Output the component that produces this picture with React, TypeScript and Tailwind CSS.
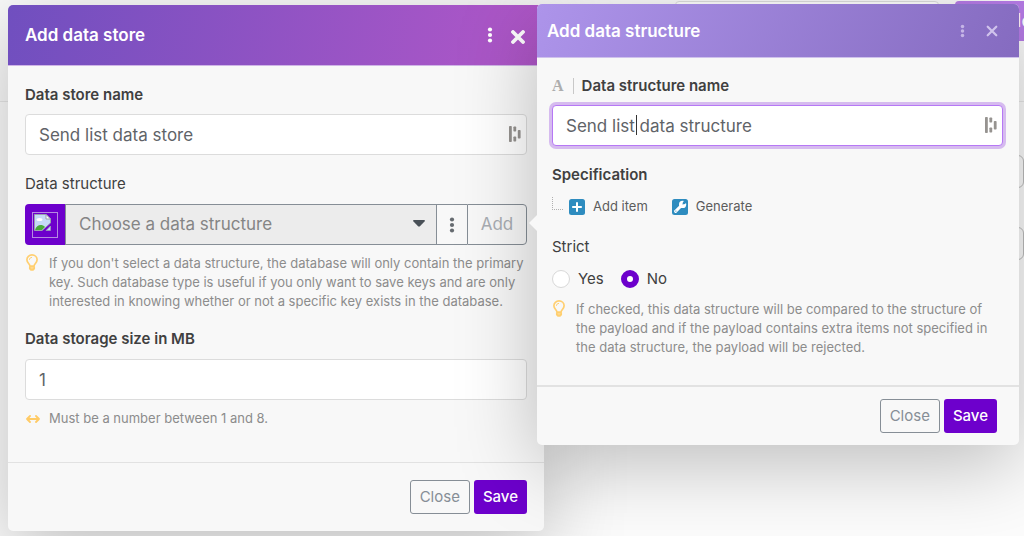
import { useState } from 'react';
import type { ReactNode } from 'react';

function KebabIcon({ className }: { className?: string }) {
  return (
    <svg viewBox="0 0 6 16" className={className} fill="currentColor" aria-hidden="true">
      <circle cx="3" cy="2.5" r="2.1" />
      <circle cx="3" cy="8" r="2.1" />
      <circle cx="3" cy="13.5" r="2.1" />
    </svg>
  );
}

function CloseIcon({ className }: { className?: string }) {
  return (
    <svg viewBox="0 0 14 14" className={className} fill="none" stroke="currentColor" aria-hidden="true">
      <path d="M2 2 L12 12 M12 2 L2 12" strokeLinecap="round" />
    </svg>
  );
}

function BulbIcon() {
  return (
    <svg viewBox="0 0 12 17" className="h-[17px] w-3" fill="none" stroke="#ffcf70" strokeWidth="1.7" aria-hidden="true">
      <path d="M4 12.2 C4 9.8 0.9 9 0.9 5.8 C0.9 3 3.2 0.9 6 0.9 C8.8 0.9 11.1 3 11.1 5.8 C11.1 9 8 9.8 8 12.2 Z" />
      <path d="M3.4 5.8 C3.4 4.4 4.5 3.4 6 3.4" strokeWidth="1" />
      <path d="M3.8 12.5 V14.6 L5 15.9 H7 L8.2 14.6 V12.5 M4 14 H8" />
    </svg>
  );
}

function RangeIcon() {
  return (
    <svg viewBox="0 0 14 8" className="h-2 w-3.5" fill="none" stroke="#ffcb66" strokeWidth="1.8" aria-hidden="true">
      <path d="M1 4 H13 M4 1 L1 4 L4 7 M10 1 L13 4 L10 7" strokeLinecap="round" strokeLinejoin="round" />
    </svg>
  );
}

function AutofillIcon() {
  return (
    <svg viewBox="0 0 12 16" className="h-4 w-3" fill="#969390" aria-hidden="true">
      <rect x="0" y="0" width="2.8" height="16" rx="0.8" />
      <rect x="4.4" y="0.5" width="2.8" height="5" rx="0.8" />
      <rect x="4.4" y="10.5" width="2.8" height="5" rx="0.8" />
      <rect x="8.8" y="4" width="2.8" height="8.5" rx="0.8" />
    </svg>
  );
}

function BrokenImageIcon() {
  return (
    <svg viewBox="0 0 26 26" className="size-[26px]" aria-hidden="true">
      <rect x="0.5" y="0.5" width="25" height="25" fill="none" stroke="#b58be0" />
      <path d="M2.5 2.5 H14 L18.5 7 V11 L10 18.5 H2.5 Z" fill="#c6d9f7" stroke="#9aa3ad" />
      <path d="M14 2.5 V7 H18.5 Z" fill="#fff" stroke="#9aa3ad" />
      <ellipse cx="7.5" cy="7.5" rx="3" ry="1.6" fill="#fff" />
      <path d="M3 18 C4.5 13 9.5 11.5 13 15 L9.8 18 Z" fill="#4aa83a" />
      <path d="M14 18.5 L18.5 14 V18.5 Z" fill="#c6d9f7" stroke="#9aa3ad" strokeWidth="0.7" />
    </svg>
  );
}

function PlusBoxIcon() {
  return (
    <svg viewBox="0 0 16 16" className="size-4" aria-hidden="true">
      <rect width="16" height="16" rx="2.5" fill="#2e8cbf" />
      <path d="M8 3.2 V12.8 M3.2 8 H12.8" stroke="#fff" strokeWidth="2" />
    </svg>
  );
}

function WrenchBoxIcon() {
  return (
    <svg viewBox="0 0 16 16" className="size-4" aria-hidden="true">
      <rect width="16" height="16" rx="2.5" fill="#2e8cbf" />
      <path d="M3.6 12.4 L9.2 6.8" stroke="#fff" strokeWidth="3" strokeLinecap="round" />
      <circle cx="10.6" cy="5.4" r="3.6" fill="#fff" />
      <path d="M10.4 5.6 L11 3 L13.4 0.6 L15.4 2.6 L13 5 Z" fill="#2e8cbf" />
      <circle cx="3.9" cy="12.1" r="0.6" fill="#2e8cbf" />
    </svg>
  );
}

function Hint({ icon, children }: { icon: ReactNode; children: ReactNode }) {
  return (
    <div className="mt-[9px] flex text-[13px] leading-[19px] text-[#8c8c8c]">
      <span className="flex w-6 shrink-0 justify-start pl-px">{icon}</span>
      <p className="flex-1">{children}</p>
    </div>
  );
}

function DialogButtons() {
  return (
    <>
      <button type="button" className="h-[34px] rounded-[3px] border border-[#868e96] px-[9px] text-[15px] text-[#868e96]">
        Close
      </button>
      <button type="button" className="h-[34px] rounded-[3px] bg-[#6d00cc] px-[9px] text-[15px] font-medium text-white">
        Save
      </button>
    </>
  );
}

const inputClass =
  'block h-[41px] w-full rounded border bg-white px-[13px] pt-px text-[17px] text-[#5f6368] outline-none';

// Parts of the scenario page that show around the dialogs
function PageBackdrop() {
  return (
    <div className="absolute inset-0 overflow-hidden bg-[#fcfcfc]" aria-hidden="true">
      <div className="flex h-[102px] justify-end border-b border-[#e8e8e8] bg-[#fafafa] pt-px">
        <div className="mr-4 h-10 w-[264px] rounded border border-[#dedede] bg-white" />
        <div className="flex h-10 w-[69px] items-center justify-end overflow-hidden rounded-l bg-[#b67be6] text-lg font-medium text-white">
          <span className="-mr-2">Ne</span>
        </div>
      </div>
      <div className="mt-[53px] flex flex-col items-end gap-[39px]">
        <div className="h-[33px] w-20 rounded-md border border-[#bdbdbd]" />
        <div className="h-[33px] w-20 rounded-md border border-[#bdbdbd]" />
      </div>
    </div>
  );
}

function DataStoreDialog() {
  const [name, setName] = useState('Send list data store');
  const [size, setSize] = useState('1');

  return (
    <section className="mt-px -mr-[7px] rounded-[5px] bg-[#f8f8f8] shadow-[0_20px_80px_rgba(0,0,0,0.25)]">
      <header className="flex h-[61px] items-center rounded-t-[5px] border-b border-[#cfb5e6] bg-[linear-gradient(100deg,#704fbf,#b157c8)] pr-[19px] pl-[17px] text-white">
        <h2 className="flex-1 pt-0.5 text-[17px] font-semibold">Add data store</h2>
        <button type="button" aria-label="More options">
          <KebabIcon className="h-4 w-1.5" />
        </button>
        <button type="button" aria-label="Close dialog" className="mt-1 ml-[18px]">
          <CloseIcon className="size-3.5 stroke-[3.8]" />
        </button>
      </header>

      <div className="px-[17px] pt-[17px] pb-[34px]">
        <label htmlFor="store-name" className="block text-[15px] leading-6 font-semibold">
          Data store name
        </label>
        <div className="relative mt-[7px]">
          <input
            id="store-name"
            value={name}
            onChange={(e) => setName(e.target.value)}
            className={`${inputClass} border-[#dcdcdc]`}
          />
          <span className="absolute top-3 right-1.5">
            <AutofillIcon />
          </span>
        </div>

        <label htmlFor="structure" className="mt-[17px] block text-[15px] leading-6">
          Data structure
        </label>
        <div className="mt-2 flex h-[41px] text-[#868e96]">
          <span className="flex w-10 shrink-0 items-center justify-center rounded-l bg-[#6d00cc]">
            <BrokenImageIcon />
          </span>
          <div className="relative flex-1">
            <select
              id="structure"
              className="h-full w-full appearance-none border border-[#868e96] bg-[#ececec] px-[13px] text-[17px] text-[#858585]"
            >
              <option>Choose a data structure</option>
            </select>
            <svg viewBox="0 0 12 7" className="pointer-events-none absolute top-4 right-3 h-[7px] w-3" fill="#495057" aria-hidden="true">
              <path d="M0.5 0 H11.5 L12 1 L6.7 6.6 H5.3 L0 1 Z" />
            </svg>
          </div>
          <button type="button" aria-label="Structure options" className="flex w-[30px] items-center justify-center border-y border-[#868e96] text-[#666b70]">
            <KebabIcon className="h-4 w-1.5" />
          </button>
          <button type="button" className="w-[60px] rounded-r border border-[#868e96] text-[17px] text-[#a9adb3]">
            Add
          </button>
        </div>
        <Hint icon={<BulbIcon />}>
          If you don't select a data structure, the database will only contain the primary key. Such database type is
          useful if you only want to save keys and are only interested in knowing whether or not a specific key exists
          in the database.
        </Hint>

        <label htmlFor="size" className="mt-4 block text-[15px] leading-6 font-semibold">
          Data storage size in MB
        </label>
        <div className="mt-2">
          <input
            id="size"
            value={size}
            onChange={(e) => setSize(e.target.value)}
            className={`${inputClass} border-[#dcdcdc]`}
          />
        </div>
        <Hint icon={<span className="flex items-center"><RangeIcon /></span>}>Must be a number between 1 and 8.</Hint>
      </div>

      <footer className="flex justify-end gap-1 border-t border-[#e2e2e2] p-[17px]">
        <DialogButtons />
      </footer>
    </section>
  );
}

function DataStructureDialog() {
  const [name, setName] = useState('Send list data structure');
  const [strict, setStrict] = useState('no');

  return (
    <section className="relative rounded-[5px] bg-[#f8f8f8] shadow-[0_20px_80px_rgba(0,0,0,0.25)]">
      {/* Arrow pointing at the Add button */}
      <span className="absolute top-[211px] right-full border-y-8 border-r-8 border-y-transparent border-r-[#f8f8f8]" />

      <header className="flex h-[54px] items-center rounded-t-[5px] border-b border-[#cfc2ec] bg-[linear-gradient(115deg,#ad94ea,#856bc0)] pr-[21px] pl-2.5 text-white">
        <h2 className="flex-1 pt-0.5 text-[17px] font-semibold">Add data structure</h2>
        <button type="button" aria-label="More options" className="text-[#c5b5e6]">
          <KebabIcon className="h-3.5 w-[5px]" />
        </button>
        <button type="button" aria-label="Close dialog" className="ml-[21px] text-[#d0c3ec]">
          <CloseIcon className="size-3 stroke-[2.6]" />
        </button>
      </header>

      <div className="pt-4 pr-4 pb-7 pl-[15px]">
        <div className="flex items-center leading-6">
          <span className="border-r border-[#c8c8c8] pr-[9px] font-['Liberation_Serif',serif] text-base leading-4 font-bold text-[#adadad]">
            A
          </span>
          <label htmlFor="structure-name" className="pl-2 text-[15px] font-semibold">
            Data structure name
          </label>
        </div>
        <div className="relative mt-[7px]">
          <input
            id="structure-name"
            value={name}
            onChange={(e) => setName(e.target.value)}
            className={`${inputClass} border-[#b678f5] ring-3 ring-[#d6bbef]`}
          />
          <span className="absolute top-2.5 left-[84px] h-5 w-px bg-[#333]" />
          <span className="absolute top-3 right-1.5">
            <AutofillIcon />
          </span>
        </div>

        <h3 className="mt-[17px] text-[15px] leading-6 font-semibold">Specification</h3>
        <div className="mt-2.5 flex h-5 items-center text-[13px] text-[#5c5c5c]">
          <span className="mb-2 h-[13px] w-[11px] border-b border-l border-dotted border-[#b0b0b0]" />
          <button type="button" className="ml-1.5 flex items-center gap-2">
            <PlusBoxIcon />
            Add item
          </button>
          <button type="button" className="ml-6 flex items-center gap-2">
            <WrenchBoxIcon />
            Generate
          </button>
        </div>

        <fieldset className="mt-[18px]">
          <legend className="text-[15px] leading-6">Strict</legend>
          <div className="mt-2 flex h-6 items-center gap-[17px] text-[15px]">
            <label className="flex items-center gap-2">
              <input
                type="radio"
                name="strict"
                checked={strict === 'yes'}
                onChange={() => setStrict('yes')}
                className="size-[18px] appearance-none rounded-full border border-[#d8d8d8] bg-white checked:border-[6px] checked:border-[#6d00cc]"
              />
              Yes
            </label>
            <label className="flex items-center gap-2">
              <input
                type="radio"
                name="strict"
                checked={strict === 'no'}
                onChange={() => setStrict('no')}
                className="size-[18px] appearance-none rounded-full border border-[#d8d8d8] bg-white checked:border-[6px] checked:border-[#6d00cc]"
              />
              No
            </label>
          </div>
        </fieldset>
        <Hint icon={<BulbIcon />}>
          If checked, this data structure will be compared to the structure of the payload and if the payload contains
          extra items not specified in the data structure, the payload will be rejected.
        </Hint>
      </div>

      <footer className="flex justify-end gap-1 border-t-2 border-[#e2e2e2] px-[22px] py-3">
        <DialogButtons />
      </footer>
    </section>
  );
}

export default function App() {
  return (
    <main className="relative min-h-screen font-[Inter,sans-serif] text-[#404040]">
      <PageBackdrop />
      <div className="relative grid grid-cols-[529fr_482fr] items-start pt-1 pr-[5px] pl-2">
        <DataStoreDialog />
        <DataStructureDialog />
      </div>
    </main>
  );
}
